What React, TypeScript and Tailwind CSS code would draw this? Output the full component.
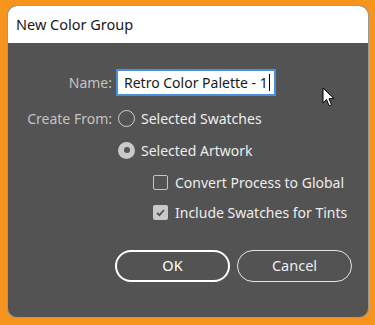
import React from "react";

function Radio({ checked }: { checked?: boolean }) {
  if (checked) {
    return (
      <span className="block w-[17px] h-[17px] rounded-full bg-[#c9c9c9] flex items-center justify-center shrink-0">
        <span className="block w-[6px] h-[6px] rounded-full bg-[#535353]" />
      </span>
    );
  }
  return <span className="block w-[17px] h-[17px] rounded-full border-[1.5px] border-[#cfcfcf] shrink-0" />;
}

function Check({ checked }: { checked?: boolean }) {
  if (checked) {
    return (
      <span className="w-[15px] h-[15px] rounded-[2px] bg-[#c9c9c9] flex items-center justify-center shrink-0">
        <svg width="11" height="11" viewBox="0 0 11 11">
          <path d="M2 5.8 L4.4 8.2 L9 3" fill="none" stroke="#535353" strokeWidth="1.8" />
        </svg>
      </span>
    );
  }
  return <span className="block w-[15px] h-[15px] rounded-[2px] border border-[#c4c4c4] shrink-0" />;
}

export default function App() {
  const font = { fontFamily: '"Noto Sans", "Open Sans", sans-serif' };
  return (
    <div className="w-[375px] h-[325px] bg-[#f7941d] relative overflow-hidden" style={font}>
      <div className="absolute left-[7px] top-[5px] w-[362px] h-[313px] rounded-[10px] overflow-hidden border border-[#9b9b9b] bg-[#535353] flex flex-col">
        <div className="h-[37px] bg-white flex items-center pl-[8px] shrink-0">
          <span className="text-[14.5px] text-[#1a1a1a] leading-none">New Color Group</span>
        </div>
        <div className="flex flex-col pt-[26px] text-[14px]">
          <div className="flex items-center h-[27px]">
            <span className="w-[104px] text-right text-[#c3c3c3]">Name:</span>
            <div className="ml-[4px] w-[160px] h-[27px] bg-white border-2 border-[#4a90d9] flex items-center pl-[6px] text-[#1a1a1a]">
              <span>Retro Color Palette - 1</span>
              <span className="block w-[1px] h-[17px] bg-black ml-[1px]" />
            </div>
          </div>
          <div className="flex items-center h-[20px] mt-[12px]">
            <span className="w-[104px] text-right text-[#c3c3c3]">Create From:</span>
            <span className="ml-[6px] flex"><Radio /></span>
            <span className="ml-[6px] text-[#ededed]">Selected Swatches</span>
          </div>
          <div className="flex items-center h-[20px] mt-[12px]">
            <span className="w-[104px]" />
            <span className="ml-[6px] flex"><Radio checked /></span>
            <span className="ml-[6px] text-[#ededed]">Selected Artwork</span>
          </div>
          <div className="flex items-center h-[20px] mt-[12px]">
            <span className="w-[145px]" />
            <Check />
            <span className="ml-[7px] text-[#ededed]">Convert Process to Global</span>
          </div>
          <div className="flex items-center h-[20px] mt-[10px]">
            <span className="w-[145px]" />
            <Check checked />
            <span className="ml-[7px] text-[#ededed]">Include Swatches for Tints</span>
          </div>
          <div className="flex items-center mt-[28px] pl-[107px] gap-[7px]">
            <button className="w-[115px] h-[32px] rounded-full border-2 border-white text-white text-[14.5px]">OK</button>
            <button className="w-[115px] h-[32px] rounded-full border-[1.5px] border-[#e6e6e6] text-[#ededed] text-[14.5px]">Cancel</button>
          </div>
        </div>
      </div>
      <svg className="absolute left-[322px] top-[87px]" width="14" height="21" viewBox="0 0 14 21">
        <path d="M1 1 L1 16 L4.5 12.5 L7.2 18.8 L9.6 17.8 L7 11.7 L12 11.7 Z" fill="white" stroke="black" strokeWidth="1" strokeLinejoin="round" />
      </svg>
    </div>
  );
}
